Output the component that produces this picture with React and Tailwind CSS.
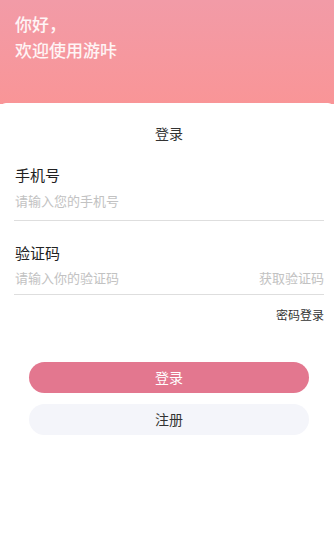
export default function App() {
  const font = { fontFamily: '"Noto Sans CJK SC", "Noto Sans", sans-serif' };
  return (
    <div className="w-[334px] h-[535px] bg-white flex flex-col font-['Noto_Sans_CJK_SC',sans-serif]" style={font}>
      <div className="h-[104px] shrink-0 bg-gradient-to-b from-[#f29ba7] to-[#f99597] px-[15px] pt-[11px]">
        <div className="text-[17px] leading-[26px] font-medium text-white/90">你好，</div>
        <div className="text-[17px] leading-[26px] font-medium text-white/90">欢迎使用游咔</div>
      </div>
      <div className="flex-1 bg-white -mt-[1px] rounded-t-[6px] pl-[14px] pr-[10px] pt-[20px] flex flex-col">
        <div className="text-center text-[14px] leading-[20px] text-[#333]">登录</div>
        <div className="mt-[21px] pl-[1px] text-[15px] leading-[22px] text-[#222]">手机号</div>
        <div className="mt-[5px] pl-[1px] pb-[9px] text-[13px] leading-[20px] text-[#c2c2c2] border-b border-[#dedede]">请输入您的手机号</div>
        <div className="mt-[21px] pl-[1px] text-[15px] leading-[22px] text-[#222]">验证码</div>
        <div className="mt-[4px] pl-[1px] pb-[6px] flex justify-between text-[13px] leading-[20px] text-[#c2c2c2] border-b border-[#dedede]">
          <span>请输入你的验证码</span>
          <span>获取验证码</span>
        </div>
        <div className="mt-[11px] text-right text-[12px] leading-[18px] text-[#333]">密码登录</div>
        <div className="mt-[38px] mx-[15px] h-[31px] rounded-full bg-[#e3778f] flex items-center justify-center text-[14px] text-white">登录</div>
        <div className="mt-[11px] mx-[15px] h-[31px] rounded-full bg-[#f4f5fa] flex items-center justify-center text-[14px] text-[#333]">注册</div>
      </div>
    </div>
  );
}
